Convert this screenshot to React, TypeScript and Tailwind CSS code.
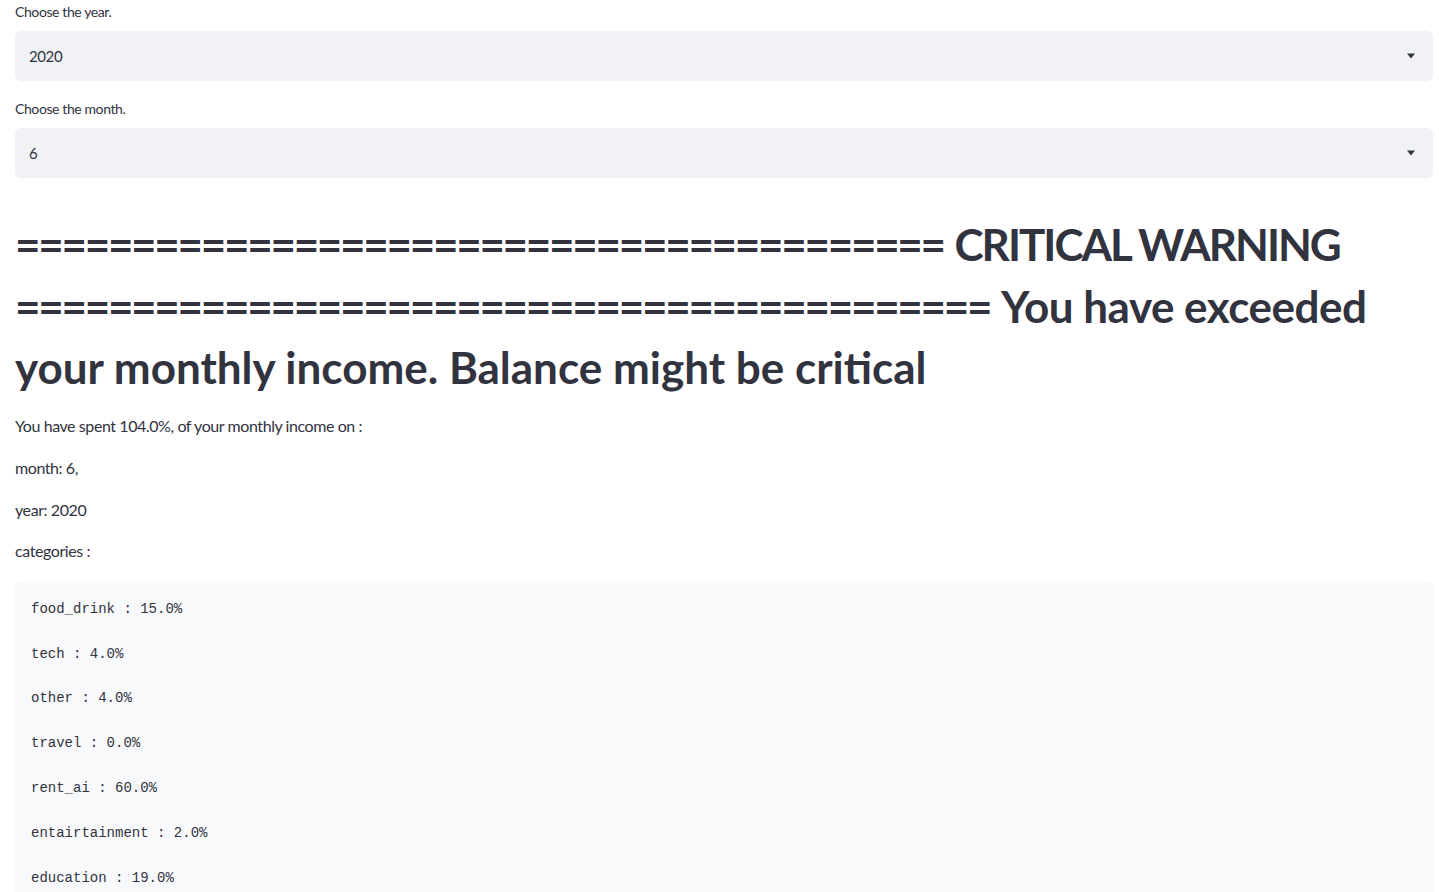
import React from "react";

const SANS = "font-['Lato','Noto_Sans',sans-serif]";

function Caret() {
  return (
    <svg width="10" height="6" viewBox="0 0 10 6" className="shrink-0">
      <path d="M1 0.5 H9 L5 5.5 Z" fill="#31333F" />
    </svg>
  );
}

function SelectBox({ label, value }: { label: string; value: string }) {
  return (
    <div className="flex flex-col">
      <label className="text-[14px] leading-[24px] tracking-[-0.4px] text-[#31333F] mb-[7px]">{label}</label>
      <div className="h-[50px] rounded-[6px] bg-[#F0F2F6] flex items-center justify-between pl-[14px] pr-[17px]">
        <span className="text-[15px] tracking-[-0.4px] text-[#31333F]">{value}</span>
        <Caret />
      </div>
    </div>
  );
}

export default function App() {
  const eq40 = "=".repeat(40);
  const eq42 = "=".repeat(42);
  const lines = [
    "food_drink : 15.0%",
    "tech : 4.0%",
    "other : 4.0%",
    "travel : 0.0%",
    "rent_ai : 60.0%",
    "entairtainment : 2.0%",
    "education : 19.0%",
  ];
  return (
    <div className={`${SANS} bg-white min-h-screen pl-[15px] pr-[6px] text-[#31333F]`}>
      <div className="flex flex-col gap-[16px]">
        <SelectBox label="Choose the year." value="2020" />
        <SelectBox label="Choose the month." value="6" />
      </div>
      <h1 className="mt-[36px] text-[44px] leading-[1.4] font-bold text-[#31333F]">
        <span className="tracking-[-2.3px]">{eq40}</span>{" "}
        <span className="tracking-[-2px]">CRITICAL WARNING</span>{" "}
        <span className="tracking-[-2.3px]">{eq42}</span>{" "}
        <span className="tracking-[-0.5px]">You have exceeded</span> your monthly income. Balance might be critical
      </h1>
      <div className="mt-[14px] text-[16px] leading-[25.6px] tracking-[-0.42px]">
        <p className="mb-[16.3px]">You have spent 104.0%, of your monthly income on :</p>
        <p className="mb-[16.3px]">month: 6,</p>
        <p className="mb-[16px]">year: 2020</p>
        <p className="mb-[17px]">categories :</p>
      </div>
      <pre className="bg-[#F8F9FB] rounded-[6px] px-[16px] pt-[17px] pb-[16px] font-['Liberation_Mono','DejaVu_Sans_Mono',monospace] text-[14px] leading-[22.4px] text-[#31333F] whitespace-pre">
        {lines.join("\n\n")}
      </pre>
    </div>
  );
}
